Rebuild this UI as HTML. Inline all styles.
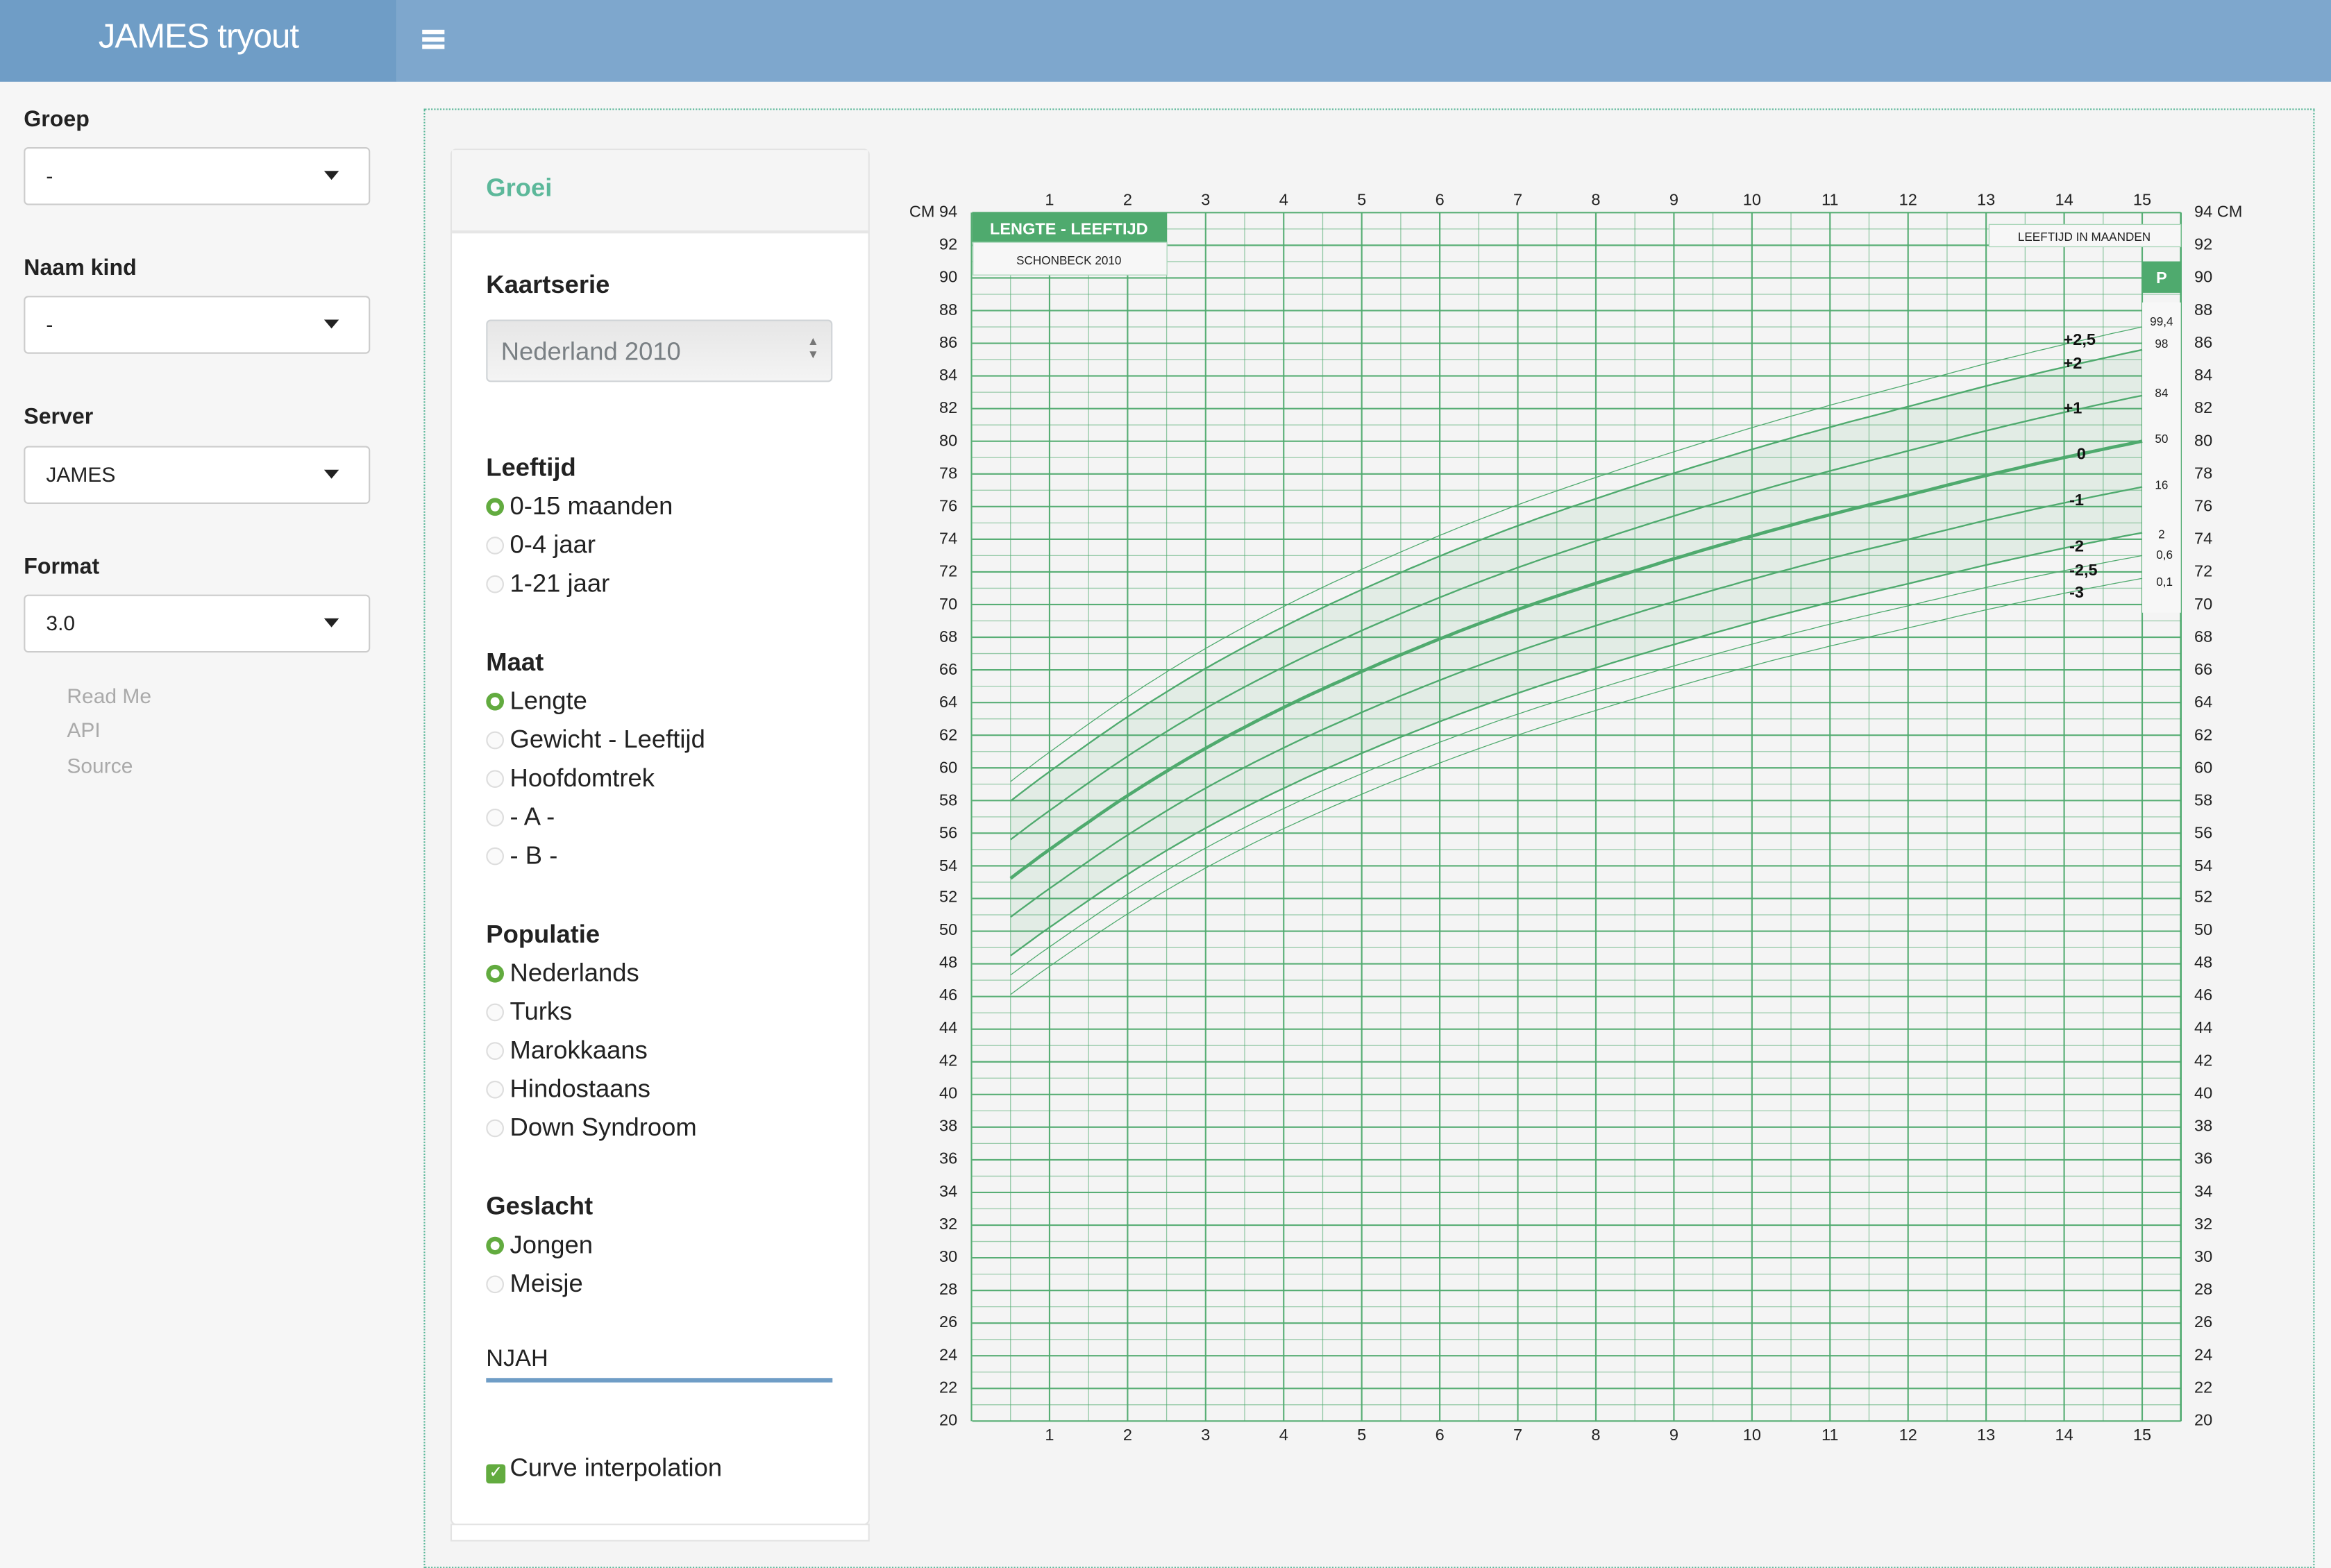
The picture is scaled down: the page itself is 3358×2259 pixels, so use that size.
<!DOCTYPE html>
<html><head><meta charset="utf-8">
<style>
html,body{margin:0;padding:0;width:3358px;height:2202px;overflow:hidden;background:#f6f6f6;}
#w{position:absolute;left:0;top:0;width:1568px;height:1028px;transform:scale(2.14158);transform-origin:0 0;font-family:"Liberation Sans",sans-serif;color:#222;}
.a{position:absolute;}
.hdrL{left:0;top:0;width:267px;height:55px;background:#6f9dc6;}
.hdrR{left:267px;top:0;width:1301px;height:55px;background:#7ea7cd;}
.title{left:0;width:267px;top:11px;text-align:center;color:#fff;font-size:23px;letter-spacing:-0.5px;}
.hb{left:284px;width:15px;height:2.5px;background:#fff;}
.lbl{font-weight:bold;font-size:15px;left:16px;}
.sel{left:16px;width:231px;height:37px;background:#fff;border:1px solid #ccc;border-radius:3px;}
.sel span{position:absolute;left:14px;top:10px;font-size:14px;}
.sel i{position:absolute;left:201px;top:15px;width:0;height:0;border-left:5.5px solid transparent;border-right:5.5px solid transparent;border-top:6px solid #222;}
.lnk{left:45px;font-size:14px;color:#aaa;}
.main{left:285px;top:73px;width:1270px;height:980px;border:1px dotted #5cb89a;background:#f4f4f4;}
.panel{left:303px;top:100px;width:280px;height:924px;background:#fff;border:1px solid #e3e3e3;border-radius:4px;}
.ph{left:304px;top:101px;width:280px;height:54px;background:#f5f5f5;border-bottom:2px solid #e6e6e6;}
.pt{left:327px;top:117px;font-size:17px;font-weight:bold;color:#5cb89a;}
.h{left:327px;font-size:17px;font-weight:bold;}
.r{left:327px;font-size:17px;}
.r b{display:inline-block;width:12px;height:12px;border-radius:50%;border:1px solid #ddd;background:#fafafa;vertical-align:-1px;margin-right:4px;box-sizing:border-box;}
.r b.on{border:3.5px solid #62ab3f;background:#fff;}
svg text{font-family:"Liberation Sans",sans-serif;}
</style></head><body><div id="w">
<div class="a hdrL"></div><div class="a hdrR"></div>
<div class="a title">JAMES tryout</div>
<div class="a hb" style="top:20px"></div><div class="a hb" style="top:25px"></div><div class="a hb" style="top:30px"></div>

<div class="a lbl" style="top:72px">Groep</div>
<div class="a sel" style="top:99px"><span>-</span><i></i></div>
<div class="a lbl" style="top:172px">Naam kind</div>
<div class="a sel" style="top:199px"><span>-</span><i></i></div>
<div class="a lbl" style="top:272px">Server</div>
<div class="a sel" style="top:300px"><span>JAMES</span><i></i></div>
<div class="a lbl" style="top:373px">Format</div>
<div class="a sel" style="top:400px"><span>3.0</span><i></i></div>
<div class="a lnk" style="top:460px">Read Me</div>
<div class="a lnk" style="top:483px">API</div>
<div class="a lnk" style="top:507px">Source</div>

<div class="a main"></div>
<div class="a panel"></div>
<div class="a ph"></div>
<div class="a pt">Groei</div>
<div class="a h" style="top:182px">Kaartserie</div>
<div class="a" style="left:327px;top:215px;width:231px;height:40px;border:1px solid #cfd3d6;border-radius:3px;background:linear-gradient(#e6e6e6,#f4f4f4);"><span style="position:absolute;left:9px;top:11px;font-size:17px;color:#7a8084;">Nederland 2010</span><span style="position:absolute;left:215px;top:9px;font-size:8px;color:#777;line-height:9px;">▲<br>▼</span></div>
<div class="a h" style="top:305px">Leeftijd</div>
<div class="a r" style="top:331px"><b class="on"></b>0-15 maanden</div>
<div class="a r" style="top:357px"><b></b>0-4 jaar</div>
<div class="a r" style="top:383px"><b></b>1-21 jaar</div>
<div class="a h" style="top:436px">Maat</div>
<div class="a r" style="top:462px"><b class="on"></b>Lengte</div>
<div class="a r" style="top:488px"><b></b>Gewicht - Leeftijd</div>
<div class="a r" style="top:514px"><b></b>Hoofdomtrek</div>
<div class="a r" style="top:540px"><b></b>- A -</div>
<div class="a r" style="top:566px"><b></b>- B -</div>
<div class="a h" style="top:619px">Populatie</div>
<div class="a r" style="top:645px"><b class="on"></b>Nederlands</div>
<div class="a r" style="top:671px"><b></b>Turks</div>
<div class="a r" style="top:697px"><b></b>Marokkaans</div>
<div class="a r" style="top:723px"><b></b>Hindostaans</div>
<div class="a r" style="top:749px"><b></b>Down Syndroom</div>
<div class="a h" style="top:802px">Geslacht</div>
<div class="a r" style="top:828px"><b class="on"></b>Jongen</div>
<div class="a r" style="top:854px"><b></b>Meisje</div>
<div class="a" style="left:327px;top:906px;font-size:16px;">NJAH</div>
<div class="a" style="left:327px;top:927px;width:233px;height:3px;background:#6f9dc6;"></div>
<div class="a r" style="top:978px"><span style="display:inline-block;width:13px;height:13px;background:#62ab3f;border-radius:2px;color:#fff;font-size:11px;line-height:13px;text-align:center;vertical-align:-1px;margin-right:3px;">✓</span>Curve interpolation</div>
<div class="a" style="left:303px;top:1025px;width:280px;height:10px;border:1px solid #e3e3e3;background:#fff;"></div>

<svg class="a" style="left:0;top:0" width="1568" height="1028" viewBox="0 0 1568 1028">
<g id="grid"></g>
<g id="curves"></g>
<rect x="654" y="143" width="131" height="20" fill="#4faa6e"/>
<text x="719" y="157.5" fill="#fff" font-size="11" font-weight="bold" text-anchor="middle">LENGTE - LEEFTIJD</text>
<rect x="654.5" y="163" width="130.5" height="22" fill="#f7f7f7" stroke="#a8d6b8" stroke-width="0.6"/>
<text x="719" y="178" fill="#222" font-size="8" text-anchor="middle">SCHONBECK 2010</text>
<rect x="1338" y="151" width="129" height="15" fill="#f7f7f7" stroke="#a8d6b8" stroke-width="0.6"/>
<text x="1402" y="162" fill="#222" font-size="8" text-anchor="middle">LEEFTIJD IN MAANDEN</text>
<rect x="1441" y="176" width="26" height="21" fill="#4faa6e"/>
<text x="1454" y="190.5" fill="#fff" font-size="11" font-weight="bold" text-anchor="middle">P</text>
<g font-size="8" fill="#222" text-anchor="middle">
<text x="1454" y="219">99,4</text><text x="1454" y="234">98</text><text x="1454" y="267">84</text><text x="1454" y="298">50</text><text x="1454" y="329">16</text><text x="1454" y="362">2</text><text x="1456" y="376">0,6</text><text x="1456" y="394">0,1</text>
</g>
<g font-size="11" font-weight="bold" fill="#111">
<text x="1388" y="232">+2,5</text><text x="1388" y="248">+2</text><text x="1388" y="278">+1</text><text x="1397" y="309">0</text><text x="1392" y="340">-1</text><text x="1392" y="371">-2</text><text x="1392" y="387">-2,5</text><text x="1392" y="402">-3</text>
</g>
<g font-size="11" fill="#222" text-anchor="middle">
<text x="706" y="138">1</text><text x="758.5" y="138">2</text><text x="811" y="138">3</text><text x="863.5" y="138">4</text><text x="916" y="138">5</text><text x="968.5" y="138">6</text><text x="1021" y="138">7</text><text x="1073.5" y="138">8</text><text x="1126" y="138">9</text><text x="1178.5" y="138">10</text><text x="1231" y="138">11</text><text x="1283.5" y="138">12</text><text x="1336" y="138">13</text><text x="1388.5" y="138">14</text><text x="1441" y="138">15</text>
<text x="706" y="969">1</text><text x="758.5" y="969">2</text><text x="811" y="969">3</text><text x="863.5" y="969">4</text><text x="916" y="969">5</text><text x="968.5" y="969">6</text><text x="1021" y="969">7</text><text x="1073.5" y="969">8</text><text x="1126" y="969">9</text><text x="1178.5" y="969">10</text><text x="1231" y="969">11</text><text x="1283.5" y="969">12</text><text x="1336" y="969">13</text><text x="1388.5" y="969">14</text><text x="1441" y="969">15</text>
</g>
<g font-size="11" fill="#222" text-anchor="end" dominant-baseline="middle">
<text x="644" y="143">CM 94</text><text x="644" y="165">92</text><text x="644" y="187">90</text><text x="644" y="209">88</text><text x="644" y="231">86</text><text x="644" y="253">84</text><text x="644" y="275">82</text><text x="644" y="297">80</text><text x="644" y="319">78</text><text x="644" y="341">76</text><text x="644" y="363">74</text><text x="644" y="385">72</text><text x="644" y="407">70</text><text x="644" y="429">68</text><text x="644" y="451">66</text><text x="644" y="473">64</text><text x="644" y="495">62</text><text x="644" y="517">60</text><text x="644" y="539">58</text><text x="644" y="561">56</text><text x="644" y="583">54</text><text x="644" y="604">52</text><text x="644" y="626">50</text><text x="644" y="648">48</text><text x="644" y="670">46</text><text x="644" y="692">44</text><text x="644" y="714">42</text><text x="644" y="736">40</text><text x="644" y="758">38</text><text x="644" y="780">36</text><text x="644" y="802">34</text><text x="644" y="824">32</text><text x="644" y="846">30</text><text x="644" y="868">28</text><text x="644" y="890">26</text><text x="644" y="912">24</text><text x="644" y="934">22</text><text x="644" y="956">20</text>
</g>
<g font-size="11" fill="#222" dominant-baseline="middle">
<text x="1476" y="143">94 CM</text><text x="1476" y="165">92</text><text x="1476" y="187">90</text><text x="1476" y="209">88</text><text x="1476" y="231">86</text><text x="1476" y="253">84</text><text x="1476" y="275">82</text><text x="1476" y="297">80</text><text x="1476" y="319">78</text><text x="1476" y="341">76</text><text x="1476" y="363">74</text><text x="1476" y="385">72</text><text x="1476" y="407">70</text><text x="1476" y="429">68</text><text x="1476" y="451">66</text><text x="1476" y="473">64</text><text x="1476" y="495">62</text><text x="1476" y="517">60</text><text x="1476" y="539">58</text><text x="1476" y="561">56</text><text x="1476" y="583">54</text><text x="1476" y="604">52</text><text x="1476" y="626">50</text><text x="1476" y="648">48</text><text x="1476" y="670">46</text><text x="1476" y="692">44</text><text x="1476" y="714">42</text><text x="1476" y="736">40</text><text x="1476" y="758">38</text><text x="1476" y="780">36</text><text x="1476" y="802">34</text><text x="1476" y="824">32</text><text x="1476" y="846">30</text><text x="1476" y="868">28</text><text x="1476" y="890">26</text><text x="1476" y="912">24</text><text x="1476" y="934">22</text><text x="1476" y="956">20</text>
</g>
</svg>
<script>
(function(){
function X(t){return 653.5+52.5*t;}
function Y(v){return 956-(v-20)*10.986;}
var g=document.getElementById("grid"),s="";
var G="#4faa6e";
for(var k=0;k<=31;k++){var x=653.5+26.25*k;var maj=k%2==0;s+='<line x1="'+x+'" y1="143" x2="'+x+'" y2="956" stroke="'+G+'" stroke-opacity="'+(maj?0.95:0.6)+'" stroke-width="'+(maj?1:0.6)+'"/>';}
s+='<line x1="1467" y1="143" x2="1467" y2="956" stroke="'+G+'" stroke-width="1.2"/>';
for(var v=20;v<=94;v++){var y=Y(v);var maj=v%2==0;s+='<line x1="654" y1="'+y+'" x2="1467" y2="'+y+'" stroke="'+G+'" stroke-opacity="'+(maj?0.95:0.55)+'" stroke-width="'+(maj?1:0.6)+'"/>';}
s+='<rect x="1441" y="'+Y(88.5)+'" width="26" height="'+(Y(69.5)-Y(88.5))+'" fill="#f7f7f7"/>';
g.innerHTML=s;
var M=[51.5,55.0,58.3,61.2,63.7,65.9,67.9,69.7,71.3,72.8,74.2,75.5,76.7,77.9,79.0,80.0];
function med(t){
 var i=Math.min(Math.floor(t),14);var f=t-i;
 var p0=M[Math.max(i-1,0)],p1=M[i],p2=M[i+1],p3=M[Math.min(i+2,15)];
 if(i==0)p0=2*M[0]-M[1]+0.4;
 if(i==14)p3=2*M[15]-M[14]-0.1;
 return 0.5*((2*p1)+(-p0+p2)*f+(2*p0-5*p1+4*p2-p3)*f*f+(-p0+3*p1-3*p2+p3)*f*f*f);
}
function sd(t){return 2.37+(2.8-2.37)*(t-0.5)/14.5;}
function pts(z){var a=[];for(var t=0.5;t<=15.001;t+=0.125){a.push([X(t),Y(med(t)+z*sd(t))]);}return a;}
function path(a){return a.map(function(p,i){return (i?"L":"M")+p[0].toFixed(1)+" "+p[1].toFixed(1);}).join("");}
var c="";
var up=pts(2),lo=pts(-2).reverse();
c+='<path d="'+path(up.concat(lo))+'Z" fill="#4faa6e" fill-opacity="0.11"/>';
var L=[[2.5,0.6],[-2.5,0.6],[-3,0.6],[2,1.1],[1,1.1],[-1,1.1],[-2,1.1],[0,2.2]];
L.forEach(function(l){c+='<path d="'+path(pts(l[0]))+'" fill="none" stroke="#4faa6e" stroke-width="'+l[1]+'" stroke-linejoin="round"/>';});
document.getElementById("curves").innerHTML=c;
})();
</script>
</div></body></html>
